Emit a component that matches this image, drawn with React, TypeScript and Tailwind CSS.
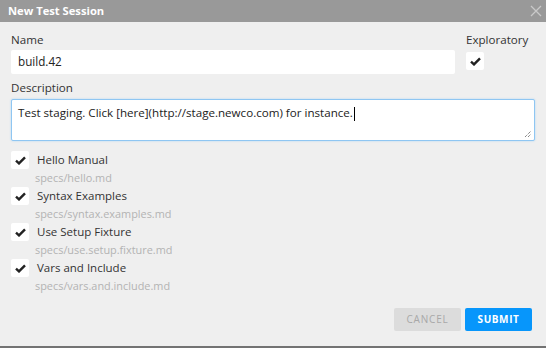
import React from 'react';

const specs = [
  { title: 'Hello Manual', path: 'specs/hello.md' },
  { title: 'Syntax Examples', path: 'specs/syntax.examples.md' },
  { title: 'Use Setup Fixture', path: 'specs/use.setup.fixture.md' },
  { title: 'Vars and Include', path: 'specs/vars.and.include.md' },
];

function CheckBox({ checked = true }: { checked?: boolean }) {
  return (
    <div className="w-[18px] h-[18px] bg-white rounded-[2px] flex items-center justify-center shrink-0">
      {checked && (
        <svg width="11" height="9" viewBox="0 0 11 9">
          <path d="M1 4.6 L4 7.4 L10 1.3" fill="none" stroke="#222" strokeWidth="2.4" />
        </svg>
      )}
    </div>
  );
}

export default function App() {
  return (
    <div
      className="w-[546px] h-[348px] bg-[#efefef] flex flex-col text-[#333] border-b-2 border-[#737373]"
      style={{ fontFamily: '"Open Sans", "Noto Sans", sans-serif' }}
    >
      <div className="h-[22px] bg-[#999999] flex items-center justify-between pl-[8px] pr-[4px] shrink-0">
        <span className="text-white font-bold text-[11.2px] leading-none">New Test Session</span>
        <svg width="12" height="12" viewBox="0 0 12 12">
          <path d="M1 1 L11 11 M11 1 L1 11" stroke="#c9c9c9" strokeWidth="1.3" />
        </svg>
      </div>

      <div className="px-[11px] pt-[10px] flex flex-col">
        <div className="flex gap-[11px]">
          <div className="flex-1 flex flex-col">
            <label className="text-[11.6px] leading-[16px] mb-[2px]">Name</label>
            <div className="h-[24px] bg-white rounded-[2px] px-[7px] flex items-center text-[11.7px] text-[#222]">
              build.42
            </div>
          </div>
          <div className="w-[69px] flex flex-col">
            <label className="text-[11.6px] leading-[16px] mb-[4px]">Exploratory</label>
            <CheckBox />
          </div>
        </div>

        <label className="text-[11.6px] leading-[16px] mt-[6px] mb-[3px]">Description</label>
        <div className="relative h-[42px] bg-white rounded-[2px] border border-[#8fc6f2] shadow-[0_0_2px_#a9d4f5] px-[6px] pt-[5px] text-[11.6px] leading-[16px] text-[#222]">
          Test staging. Click [here](http://stage.newco.com) for instance.
          <span className="inline-block w-[1px] h-[14px] bg-black align-middle ml-[1px]" />
          <svg width="8" height="8" viewBox="0 0 8 8" className="absolute right-[2px] bottom-[2px]">
            <path d="M1 7 L7 1 M4 7 L7 4" stroke="#555" strokeWidth="1" strokeDasharray="1 1" />
          </svg>
        </div>

        <div className="flex flex-col mt-[10px]">
          {specs.map((s) => (
            <div key={s.path} className="h-[36px] flex flex-col">
              <div className="h-[18px] flex items-center gap-[8px]">
                <CheckBox />
                <span className="text-[11.5px] leading-none">{s.title}</span>
              </div>
              <div className="pl-[24px] text-[10.9px] leading-[18px] text-[#b3b3b3]">{s.path}</div>
            </div>
          ))}
        </div>
      </div>

      <div className="mt-auto flex justify-end gap-[4px] pr-[14px] pb-[15px]">
        <button className="w-[67px] h-[23px] bg-[#dcdcdc] text-[#a8a8a8] text-[10px] tracking-[0.08em] rounded-[2px]">
          CANCEL
        </button>
        <button className="w-[67px] h-[23px] bg-[#0796fb] text-white font-bold text-[10px] tracking-[0.06em] rounded-[2px]">
          SUBMIT
        </button>
      </div>
    </div>
  );
}
